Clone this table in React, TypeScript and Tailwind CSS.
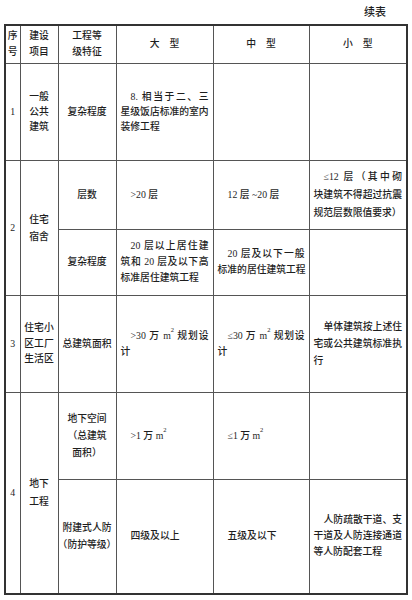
import React from 'react';

const td = 'border border-[#555] p-0 align-middle';

// m² with a small raised 2
const M2 = () => (
    <>
        m<sup className="text-[6.5px] leading-none align-[3px]">2</sup>
    </>
);

// centred stack of short lines (row titles, headers)
const Stack = ({ lines, lh = 'leading-[16px]' }: { lines: React.ReactNode[]; lh?: string }) => (
    <div className={`flex flex-col items-center text-center ${lh}`}>
        {lines.map((l, i) => (
            <div key={i} className="whitespace-nowrap">{l}</div>
        ))}
    </div>
);

// paragraph text: first line indented, full lines justified
const Para = ({ lines, lh = 'leading-[16px]' }: { lines: React.ReactNode[]; lh?: string }) => (
    <div className={`px-[4px] ${lh}`}>
        {lines.map((l, i) => (
            <div
                key={i}
                className={`whitespace-nowrap ${i === 0 ? 'pl-[10px]' : ''} ${i < lines.length - 1 ? '[text-align-last:justify] text-justify' : 'text-left'}`}
            >
                {l}
            </div>
        ))}
    </div>
);

export default function App() {
    return (
        <div className="w-[412px] h-[600px] bg-white text-[#1e1e1e] font-['Liberation_Serif','Noto_Sans_CJK_SC',serif] font-medium text-[9.8px]">
            <div className="h-[24px] flex items-center justify-end pr-[26px] text-[11px]">续表</div>
            <div className="px-[4px]">
                <table className="table-fixed border-collapse w-[402px] border-2 border-[#333]">
                    <colgroup>
                        <col className="w-[15px]" />
                        <col className="w-[38px]" />
                        <col className="w-[58px]" />
                        <col className="w-[97px]" />
                        <col className="w-[96px]" />
                        <col className="w-[98px]" />
                    </colgroup>
                    <tbody>
                        {/* Header */}
                        <tr className="h-[38px]">
                            <td className={td}><Stack lines={['序', '号']} /></td>
                            <td className={td}><Stack lines={['建设', '项目']} /></td>
                            <td className={td}><Stack lines={['工程等', '级特征']} /></td>
                            <td className={td}><Stack lines={['大　型']} /></td>
                            <td className={td}><Stack lines={['中　型']} /></td>
                            <td className={td}><Stack lines={['小　型']} /></td>
                        </tr>

                        {/* 1 */}
                        <tr className="h-[97px]">
                            <td className={td}><Stack lines={['1']} /></td>
                            <td className={td}><Stack lines={['一般', '公共', '建筑']} lh="leading-[15px]" /></td>
                            <td className={td}><Stack lines={['复杂程度']} /></td>
                            <td className={td}>
                                <Para lines={['8. 相当于二、三', '星级饭店标准的室内', '装修工程']} lh="leading-[15px]" />
                            </td>
                            <td className={td}></td>
                            <td className={td}></td>
                        </tr>

                        {/* 2 */}
                        <tr className="h-[69px]">
                            <td className={td} rowSpan={2}><Stack lines={['2']} /></td>
                            <td className={td} rowSpan={2}><Stack lines={['住宅', '宿舍']} lh="leading-[17px]" /></td>
                            <td className={td}><Stack lines={['层数']} /></td>
                            <td className={td}><Para lines={['>20 层']} /></td>
                            <td className={td}><Para lines={['12 层 ~20 层']} /></td>
                            <td className={td}>
                                <Para lines={['≤12 层（其中砌', '块建筑不得超过抗震', '规范层数限值要求）']} lh="leading-[18px]" />
                            </td>
                        </tr>
                        <tr className="h-[66px]">
                            <td className={td}><Stack lines={['复杂程度']} /></td>
                            <td className={td}>
                                <Para lines={['20 层以上居住建', '筑和 20 层及以下高', '标准居住建筑工程']} />
                            </td>
                            <td className={td}>
                                <Para lines={['20 层及以下一般', '标准的居住建筑工程']} />
                            </td>
                            <td className={td}></td>
                        </tr>

                        {/* 3 */}
                        <tr className="h-[97px]">
                            <td className={td}><Stack lines={['3']} /></td>
                            <td className={td}><Stack lines={['住宅小', '区工厂', '生活区']} lh="leading-[15.5px]" /></td>
                            <td className={td}><Stack lines={['总建筑面积']} /></td>
                            <td className={td}>
                                <Para lines={[<>&gt;30 万 <M2 /> 规划设</>, '计']} />
                            </td>
                            <td className={td}>
                                <Para lines={[<>≤30 万 <M2 /> 规划设</>, '计']} />
                            </td>
                            <td className={td}>
                                <Para lines={['单体建筑按上述住', '宅或公共建筑标准执', '行']} lh="leading-[17px]" />
                            </td>
                        </tr>

                        {/* 4 */}
                        <tr className="h-[87px]">
                            <td className={td} rowSpan={2}><Stack lines={['4']} /></td>
                            <td className={td} rowSpan={2}><Stack lines={['地下', '工程']} lh="leading-[18px]" /></td>
                            <td className={td}><Stack lines={['地下空间', '（总建筑', '面积）']} lh="leading-[17px]" /></td>
                            <td className={td}><Para lines={[<>&gt;1 万 <M2 /></>]} /></td>
                            <td className={td}><Para lines={[<>≤1 万 <M2 /></>]} /></td>
                            <td className={td}></td>
                        </tr>
                        <tr className="h-[115px]">
                            <td className={td}><Stack lines={['附建式人防', '（防护等级）']} lh="leading-[17px]" /></td>
                            <td className={td}><Para lines={['四级及以上']} /></td>
                            <td className={td}><Para lines={['五级及以下']} /></td>
                            <td className={td}>
                                <Para lines={['人防疏散干道、支', '干道及人防连接通道', '等人防配套工程']} />
                            </td>
                        </tr>
                    </tbody>
                </table>
            </div>
        </div>
    );
}
